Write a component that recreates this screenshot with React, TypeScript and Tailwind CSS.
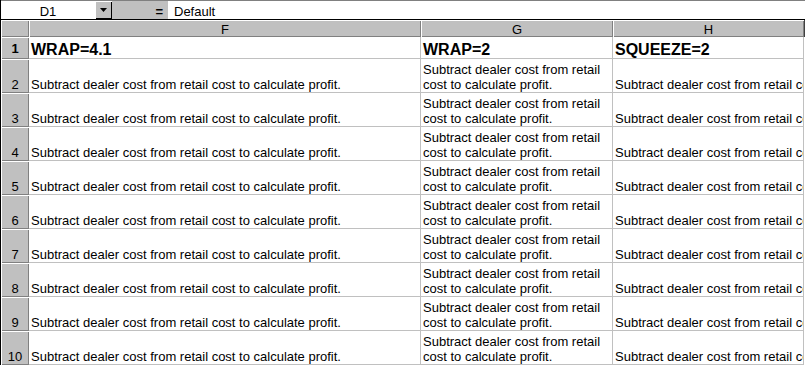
import React from "react";

const TEXT = "Subtract dealer cost from retail cost to calculate profit.";
const rows = [2, 3, 4, 5, 6, 7, 8, 9, 10];

const headerCell =
  "bg-[#c0c0c0] shadow-[inset_1px_1px_0_#ffffff,inset_-1px_-1px_0_#808080]";

export default function App() {
  return (
    <div className="w-[805px] h-[365px] overflow-hidden bg-white border-l border-black font-['Liberation_Sans',Arial,sans-serif] text-[13px] text-black">
      {/* Formula bar */}
      <div className="flex h-[20px] border-t border-[#808080] border-b border-b-black">
        <div className="w-[94px] flex items-end justify-center leading-[15px]">D1</div>
        <div className="w-[17px] flex items-center justify-center bg-[#c0c0c0] shadow-[inset_1px_1px_0_#ffffff,inset_-1px_-1px_0_#000000]">
          <svg width="7" height="4" viewBox="0 0 7 4">
            <path d="M0 0h7L3.5 4z" fill="#000" />
          </svg>
        </div>
        <div className="w-[56px] bg-[#c0c0c0] flex items-end justify-end pr-[5px] leading-[15px] font-bold">
          =
        </div>
        <div className="flex-1 flex items-end pl-[6px] leading-[15px]">Default</div>
      </div>

      {/* Column headers */}
      <div className="flex h-[17px]">
        <div className={`w-[28px] ${headerCell}`} />
        {[
          ["F", "w-[392px]"],
          ["G", "w-[192px]"],
          ["H", "w-[191px]"],
        ].map(([l, w]) => (
          <div key={l} className={`${w} ${headerCell} flex items-end justify-center leading-[15px]`}>
            {l}
          </div>
        ))}
        <div className="w-[1px] bg-[#404040]" />
      </div>

      {/* Row 1 */}
      <div className="flex h-[22px]">
        <div className={`w-[28px] ${headerCell} flex items-end justify-center leading-[15px] font-bold pb-[3px]`}>
          1
        </div>
        <div className="w-[392px] border-r border-b border-[#c0c0c0] flex items-end pl-[2px] text-[16px] leading-[16px] font-bold">
          WRAP=4.1
        </div>
        <div className="w-[192px] border-r border-b border-[#c0c0c0] flex items-end pl-[2px] text-[16px] leading-[16px] font-bold">
          WRAP=2
        </div>
        <div className="w-[191px] border-r border-b border-[#c0c0c0] flex items-end pl-[2px] text-[16px] leading-[16px] font-bold">
          SQUEEZE=2
        </div>
      </div>

      {/* Data rows */}
      {rows.map((r) => (
        <div key={r} className="flex h-[34px]">
          <div className={`w-[28px] ${headerCell} flex items-end justify-center leading-[15px] pb-[1px]`}>
            {r}
          </div>
          <div className="w-[392px] border-r border-b border-[#c0c0c0] flex items-end pl-[2px] leading-[15px] whitespace-nowrap overflow-hidden">
            {TEXT}
          </div>
          <div className="w-[192px] border-r border-b border-[#c0c0c0] flex items-end pl-[2px] pr-[2px] leading-[15px] overflow-hidden">
            {TEXT}
          </div>
          <div className="w-[191px] border-r border-b border-[#c0c0c0] flex items-end pl-[2px] leading-[15px] whitespace-nowrap overflow-hidden">
            {TEXT}
          </div>
        </div>
      ))}
    </div>
  );
}
